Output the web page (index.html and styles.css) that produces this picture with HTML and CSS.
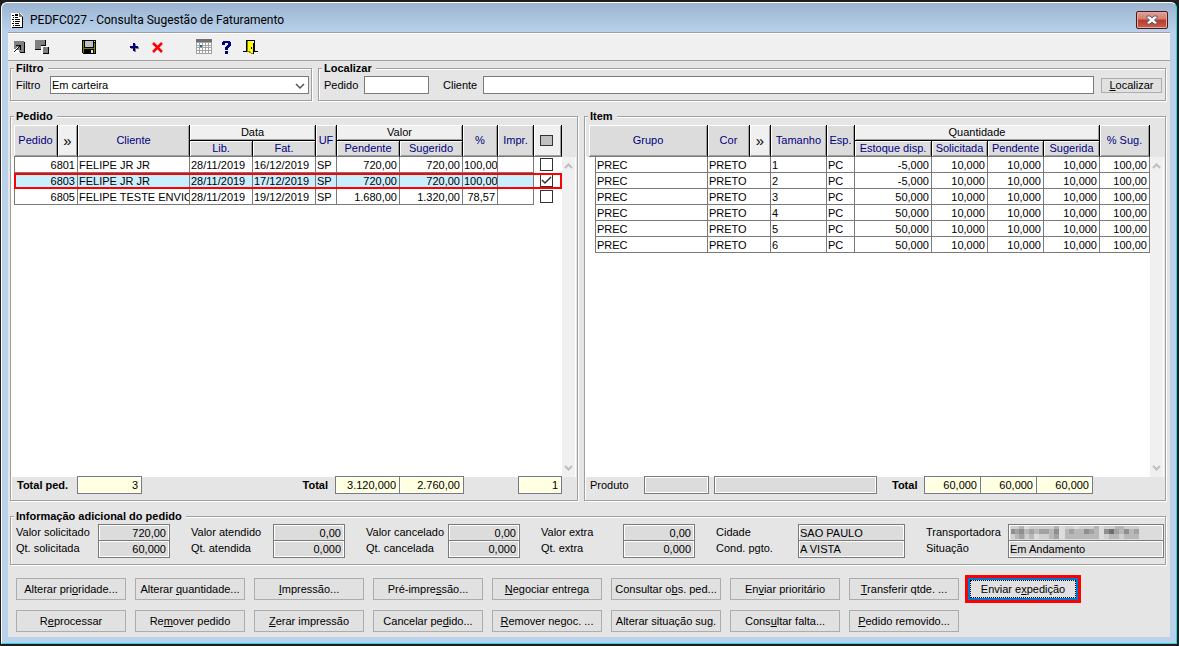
FILE: index.html
```
<!DOCTYPE html>
<html lang="pt-BR">
<head>
    <meta charset="UTF-8">
    <meta name="viewport" content="width=device-width, initial-scale=1.0">
    <title>PEDFC027 - Consulta Sugestão de Faturamento</title>
    <link rel="stylesheet" href="styles.css">
</head>
<body>
<div class="window">
    <header class="titlebar">
        <svg class="title-icon" width="14" height="17" viewBox="0 0 14 17" shape-rendering="crispEdges">
            <path d="M0 1h9l3 3v12H0z" fill="#fff"/>
            <path d="M11 5h1v11h-1zM1 15h11v1H1z" fill="#000"/>
            <path d="M8 1h1v1h1v1h1v1h1v1H8z" fill="#777"/>
            <path d="M1 3h2v1H1zM4 2h3v2H4zM2 5h1v1H2zM4 5h3v1H4zM1 7h2v1H1zM4 7h5v1H4zM2 9h1v1H2zM4 9h5v1H4zM1 11h2v1H1zM4 11h4v1H4zM2 13h1v1H2zM4 13h5v1H4z" fill="#000"/>
        </svg>
        <h1>PEDFC027 - Consulta Sugestão de Faturamento</h1>
        <button type="button" class="close" aria-label="Fechar">
            <svg width="12" height="10" viewBox="0 0 12 10">
                <path d="M1 1h3l2 2 2-2h3v1.500L8.500 5 11 7.500V9H8L6 7 4 9H1V7.500L3.500 5 1 2.500z" fill="#fff" stroke="#555b6e"/>
            </svg>
        </button>
    </header>
    <main class="client">
        <div class="toolbar">
            <button type="button" class="tool" aria-label="Restaurar">
                <svg width="16" height="16" viewBox="0 0 16 16" shape-rendering="crispEdges">
                    <path d="M3 2h10v11H3z" fill="#808080"/>
                    <path d="M13 3h1v11H9v-1h4z" fill="#000"/>
                    <path d="M2 10h3v1h3v3H2z" fill="#fff"/>
                    <path d="M5 6h5v5H9V8H8v1H7v1H6v1H5v1H4v1H3v-1h1v-1h1v-1h1V9h1V8h1V7H5z" fill="#000"/>
                    <path d="M6 8h1v1H6zM5 9h1v1H5z" fill="#fff"/>
                </svg>
            </button>
            <button type="button" class="tool" aria-label="Organizar">
                <svg width="16" height="16" viewBox="0 0 16 16" shape-rendering="crispEdges">
                    <path d="M1 1h10v5H7v4H1z" fill="#808080"/>
                    <path d="M11 1h1v5h-1zM1 10h6v1H1zM7 6h5v1H7z" fill="#000"/>
                    <path d="M7 7h8v8H7z" fill="#fff"/>
                    <path d="M9 8h5v6H9z" fill="#808080"/>
                    <path d="M14 8h1v7H9v-1h5z" fill="#000"/>
                </svg>
            </button>
            <button type="button" class="tool tool-save" aria-label="Salvar">
                <svg width="16" height="16" viewBox="0 0 16 16" shape-rendering="crispEdges">
                    <path d="M1 1h14v14H2v-1H1z" fill="#000"/>
                    <path d="M2 2h1v12H2zM13 4h1v10h-1zM3 9h10v1H3z" fill="#808000"/>
                    <path d="M4 2h8v6H4z" fill="#c0c0c0"/>
                    <path d="M13 2h1v1h-1zM10 11h2v3h-2z" fill="#e6e6e6"/>
                </svg>
            </button>
            <button type="button" class="tool tool-add" aria-label="Incluir">
                <svg width="16" height="16" viewBox="0 0 16 16" shape-rendering="crispEdges">
                    <path d="M8 5h2v3h3v2h-3v3H8v-3H5V8h3z" fill="#808080"/>
                    <path d="M7 4h2v3h3v2H9v3H7V9H4V7h3z" fill="#000080"/>
                </svg>
            </button>
            <button type="button" class="tool" aria-label="Excluir">
                <svg width="16" height="16" viewBox="0 0 16 16">
                    <path d="M4 4l9 9M13 4l-9 9" stroke="#f00" stroke-width="2.500"/>
                </svg>
            </button>
            <button type="button" class="tool tool-calendar" aria-label="Calendário">
                <svg width="16" height="16" viewBox="0 0 16 16" shape-rendering="crispEdges">
                    <path d="M0 3h16v12H0z" fill="#a0a0a0"/>
                    <path d="M0 0h16v3H0z" fill="#707070"/>
                    <path d="M1 4h2v2H1zM4 4h2v2H4zM7 4h2v2H7zM10 4h2v2h-2zM13 4h2v2h-2zM1 7h2v1H1zM7 7h2v1H7zM10 7h2v1h-2zM13 7h2v1h-2zM1 9h2v2H1zM4 9h2v2H4zM7 9h2v2H7zM10 9h2v2h-2zM13 9h2v2h-2zM1 12h2v2H1zM4 12h2v2H4zM7 12h2v2H7zM10 12h2v2h-2zM13 12h2v2h-2z" fill="#fff"/>
                    <path d="M4 6h2v2H4z" fill="#0070a0"/>
                </svg>
            </button>
            <button type="button" class="tool" aria-label="Ajuda">
                <svg width="16" height="16" viewBox="0 0 16 16" shape-rendering="crispEdges">
                    <path d="M4 2h7v1h1v4h-1v1h-1v1H9v2H6V8h1V7h1V6h1V4H6v2H3V3h1zM6 12h3v3H6z" fill="#000080"/>
                </svg>
            </button>
            <button type="button" class="tool" aria-label="Sair">
                <svg width="16" height="16" viewBox="0 0 16 16" shape-rendering="crispEdges">
                    <path d="M4 1h9v11h3v1h-4V2H5v11H1v-1h3z" fill="#000"/>
                    <path d="M6 2h3v1h2v1h1v11h-2v-1H8v-1H6z" fill="#ff0"/>
                    <path d="M5 2h1v10h2v1h1v1h2v1H9v-1H7v-1H5z" fill="#808000"/>
                    <path d="M9 8h1v2H9zM11 4h1v11h-1z" fill="#000"/>
                </svg>
            </button>
        </div>

        <div class="filters">
            <fieldset class="group filtro">
                <legend>Filtro</legend>
                <label for="filtro">Filtro</label>
                <select id="filtro">
                    <option>Em carteira</option>
                </select>
            </fieldset>
            <fieldset class="group localizar">
                <legend>Localizar</legend>
                <label for="locPedido">Pedido</label>
                <input type="text" id="locPedido" class="w65">
                <label for="locCliente">Cliente</label>
                <input type="text" id="locCliente" class="grow">
                <button type="button" class="btn btn-small"><span><u>L</u>ocalizar</span></button>
            </fieldset>
        </div>

        <div class="lists">
            <fieldset class="group list-group">
                <legend>Pedido</legend>
                <div class="list">
                    <div class="list-body">
                        <table>
                            <colgroup>
                                <col class="c44"><col class="c20"><col><col class="c63"><col class="c63"><col class="c21"><col class="c63"><col class="c63"><col class="c35"><col class="c36"><col class="c28">
                            </colgroup>
                            <thead>
                                <tr>
                                    <th rowspan="2">Pedido</th>
                                    <th rowspan="2" class="plain more">»</th>
                                    <th rowspan="2">Cliente</th>
                                    <th colspan="2" class="plain span">Data</th>
                                    <th rowspan="2">UF</th>
                                    <th colspan="2" class="plain span">Valor</th>
                                    <th rowspan="2">%</th>
                                    <th rowspan="2">Impr.</th>
                                    <th rowspan="2" class="plain check"><button type="button" class="mark-all" aria-label="Marcar todos"></button></th>
                                </tr>
                                <tr>
                                    <th>Lib.</th>
                                    <th>Fat.</th>
                                    <th>Pendente</th>
                                    <th>Sugerido</th>
                                </tr>
                            </thead>
                            <tbody>
                                <tr>
                                    <td colspan="2" class="num first">6801</td>
                                    <td>FELIPE JR JR</td>
                                    <td>28/11/2019</td>
                                    <td>16/12/2019</td>
                                    <td>SP</td>
                                    <td class="num">720,00</td>
                                    <td class="num">720,00</td>
                                    <td class="num">100,00</td>
                                    <td></td>
                                    <td class="check"><input type="checkbox" aria-label="Pedido 6801"></td>
                                </tr>
                                <tr class="selected">
                                    <td colspan="2" class="num first">6803</td>
                                    <td>FELIPE JR JR</td>
                                    <td>28/11/2019</td>
                                    <td>17/12/2019</td>
                                    <td>SP</td>
                                    <td class="num">720,00</td>
                                    <td class="num">720,00</td>
                                    <td class="num">100,00</td>
                                    <td></td>
                                    <td class="check"><input type="checkbox" aria-label="Pedido 6803" checked></td>
                                </tr>
                                <tr>
                                    <td colspan="2" class="num first">6805</td>
                                    <td>FELIPE TESTE ENVIO C</td>
                                    <td>28/11/2019</td>
                                    <td>19/12/2019</td>
                                    <td>SP</td>
                                    <td class="num">1.680,00</td>
                                    <td class="num">1.320,00</td>
                                    <td class="num">78,57</td>
                                    <td></td>
                                    <td class="check"><input type="checkbox" aria-label="Pedido 6805"></td>
                                </tr>
                            </tbody>
                        </table>
                    </div>
                    <div class="scrollbar">
                        <svg width="9" height="6" viewBox="0 0 9 6"><path d="M1 5l3.500-3.500L8 5" fill="none" stroke="#bfbfbf" stroke-width="2"/></svg>
                        <svg width="9" height="6" viewBox="0 0 9 6"><path d="M1 1l3.500 3.500L8 1" fill="none" stroke="#bfbfbf" stroke-width="2"/></svg>
                    </div>
                </div>
                <div class="totals totals-pedido">
                    <label for="totalPed" class="strong">Total ped.</label>
                    <input type="text" id="totalPed" class="sum w65" value="3" readonly>
                    <label for="totalPendente" class="strong push">Total</label>
                    <div class="joined">
                        <input type="text" id="totalPendente" class="sum w65" value="3.120,000" readonly>
                        <input type="text" class="sum w65" value="2.760,00" aria-label="Total sugerido" readonly>
                    </div>
                    <input type="text" class="sum marked" value="1" aria-label="Pedidos marcados" readonly>
                </div>
            </fieldset>

            <fieldset class="group list-group">
                <legend>Item</legend>
                <div class="list list-item">
                    <div class="list-body">
                        <table>
                            <colgroup>
                                <col class="c7"><col><col class="c42"><col class="c21"><col class="c56"><col class="c28"><col class="c77"><col class="c56"><col class="c56"><col class="c56"><col class="c50">
                            </colgroup>
                            <thead>
                                <tr>
                                    <th rowspan="2" colspan="2">Grupo</th>
                                    <th rowspan="2">Cor</th>
                                    <th rowspan="2" class="plain more">»</th>
                                    <th rowspan="2">Tamanho</th>
                                    <th rowspan="2">Esp.</th>
                                    <th colspan="4" class="plain span">Quantidade</th>
                                    <th rowspan="2">% Sug.</th>
                                </tr>
                                <tr>
                                    <th>Estoque disp.</th>
                                    <th>Solicitada</th>
                                    <th>Pendente</th>
                                    <th>Sugerida</th>
                                </tr>
                            </thead>
                            <tbody>
                                <tr><td class="gutter"></td><td>PREC</td><td colspan="2">PRETO</td><td>1</td><td>PC</td><td class="num">-5,000</td><td class="num">10,000</td><td class="num">10,000</td><td class="num">10,000</td><td class="num">100,00</td></tr>
                                <tr><td class="gutter"></td><td>PREC</td><td colspan="2">PRETO</td><td>2</td><td>PC</td><td class="num">-5,000</td><td class="num">10,000</td><td class="num">10,000</td><td class="num">10,000</td><td class="num">100,00</td></tr>
                                <tr><td class="gutter"></td><td>PREC</td><td colspan="2">PRETO</td><td>3</td><td>PC</td><td class="num">50,000</td><td class="num">10,000</td><td class="num">10,000</td><td class="num">10,000</td><td class="num">100,00</td></tr>
                                <tr><td class="gutter"></td><td>PREC</td><td colspan="2">PRETO</td><td>4</td><td>PC</td><td class="num">50,000</td><td class="num">10,000</td><td class="num">10,000</td><td class="num">10,000</td><td class="num">100,00</td></tr>
                                <tr><td class="gutter"></td><td>PREC</td><td colspan="2">PRETO</td><td>5</td><td>PC</td><td class="num">50,000</td><td class="num">10,000</td><td class="num">10,000</td><td class="num">10,000</td><td class="num">100,00</td></tr>
                                <tr><td class="gutter"></td><td>PREC</td><td colspan="2">PRETO</td><td>6</td><td>PC</td><td class="num">50,000</td><td class="num">10,000</td><td class="num">10,000</td><td class="num">10,000</td><td class="num">100,00</td></tr>
                            </tbody>
                        </table>
                    </div>
                    <div class="scrollbar">
                        <svg width="9" height="6" viewBox="0 0 9 6"><path d="M1 5l3.500-3.500L8 5" fill="none" stroke="#bfbfbf" stroke-width="2"/></svg>
                        <svg width="9" height="6" viewBox="0 0 9 6"><path d="M1 1l3.500 3.500L8 1" fill="none" stroke="#bfbfbf" stroke-width="2"/></svg>
                    </div>
                </div>
                <div class="totals totals-item">
                    <label for="produto">Produto</label>
                    <input type="text" id="produto" class="info w65" readonly>
                    <input type="text" class="info grow" aria-label="Descrição do produto" readonly>
                    <label for="totalItem" class="strong">Total</label>
                    <div class="joined">
                        <input type="text" id="totalItem" class="sum w57" value="60,000" readonly>
                        <input type="text" class="sum w57" value="60,000" aria-label="Total pendente" readonly>
                        <input type="text" class="sum w57" value="60,000" aria-label="Total sugerida" readonly>
                    </div>
                </div>
            </fieldset>
        </div>

        <fieldset class="group adicional">
            <legend>Informação adicional do pedido</legend>
            <div class="pair">
                <label for="valSolicitado">Valor solicitado</label>
                <input type="text" id="valSolicitado" class="info num" value="720,00" readonly>
                <label for="qtSolicitada">Qt. solicitada</label>
                <input type="text" id="qtSolicitada" class="info num" value="60,000" readonly>
            </div>
            <div class="pair">
                <label for="valAtendido">Valor atendido</label>
                <input type="text" id="valAtendido" class="info num" value="0,00" readonly>
                <label for="qtAtendida">Qt. atendida</label>
                <input type="text" id="qtAtendida" class="info num" value="0,000" readonly>
            </div>
            <div class="pair">
                <label for="valCancelado">Valor cancelado</label>
                <input type="text" id="valCancelado" class="info num" value="0,00" readonly>
                <label for="qtCancelada">Qt. cancelada</label>
                <input type="text" id="qtCancelada" class="info num" value="0,000" readonly>
            </div>
            <div class="pair">
                <label for="valExtra">Valor extra</label>
                <input type="text" id="valExtra" class="info num" value="0,00" readonly>
                <label for="qtExtra">Qt. extra</label>
                <input type="text" id="qtExtra" class="info num" value="0,000" readonly>
            </div>
            <div class="pair pair-text">
                <label for="cidade">Cidade</label>
                <input type="text" id="cidade" class="info" value="SAO PAULO" readonly>
                <label for="condPgto">Cond. pgto.</label>
                <input type="text" id="condPgto" class="info" value="A VISTA" readonly>
            </div>
            <div class="pair pair-wide">
                <span>Transportadora</span>
                <div class="info masked">
                    <svg width="130" height="13" viewBox="0 0 130 13" shape-rendering="crispEdges">
                        <path d="M0 0h128v13H0z" fill="#cfcfcf"/>
                        <path d="M0 3h48v5H0zM54 3h34v10H54zM94 3h34v5H94zM4 8h10v5H4zM18 8h10v5H18zM38 8h10v5H38zM98 8h10v5H98zM113 8h15v5H113z" fill="#b8b8b8"/>
                        <path d="M8 0h5v3H8zM43 0h5v3h-5zM83 0h5v3h-5zM104 0h9v3h-9z" fill="#b4b4b4"/>
                        <path d="M4 3h5v5H4zM18 3h5v5h-5zM28 3h10v5H28zM58 3h5v5h-5zM78 3h5v5h-5zM103 3h5v5h-5zM123 3h5v5h-5zM8 8h5v5H8zM43 8h5v5h-5z" fill="#a2a2a2"/>
                        <path d="M0 3h4v5H0zM8 3h5v5H8zM43 3h5v5h-5zM73 3h5v5h-5zM93 3h5v5h-5zM113 3h5v5h-5z" fill="#8e8e8e"/>
                        <path d="M98 3h5v5h-5z" fill="#6f6f6f"/>
                        <path d="M48 0h6v13h-6zM88 0h5v13h-5zM13 0h5v3h-5zM63 0h5v3h-5zM23 8h5v5h-5z" fill="#dcdcdc"/>
                    </svg>
                </div>
                <label for="situacao">Situação</label>
                <input type="text" id="situacao" class="info" value="Em Andamento" readonly>
            </div>
        </fieldset>

        <div class="actions">
            <button type="button" class="btn"><span>Alterar pri<u>o</u>ridade...</span></button>
            <button type="button" class="btn"><span>Alterar <u>q</u>uantidade...</span></button>
            <button type="button" class="btn"><span><u>I</u>mpressão...</span></button>
            <button type="button" class="btn"><span>Pré-impre<u>s</u>são...</span></button>
            <button type="button" class="btn"><span><u>N</u>egociar entrega</span></button>
            <button type="button" class="btn"><span>Consultar o<u>b</u>s. ped...</span></button>
            <button type="button" class="btn"><span>En<u>v</u>iar prioritário</span></button>
            <button type="button" class="btn"><span><u>T</u>ransferir qtde. ...</span></button>
            <button type="button" class="btn focused"><span>Enviar e<u>x</u>pedição</span></button>
            <button type="button" class="btn"><span>R<u>e</u>processar</span></button>
            <button type="button" class="btn"><span>Re<u>m</u>over pedido</span></button>
            <button type="button" class="btn"><span><u>Z</u>erar impressão</span></button>
            <button type="button" class="btn"><span>Cancelar pe<u>d</u>ido...</span></button>
            <button type="button" class="btn"><span><u>R</u>emover negoc. ...</span></button>
            <button type="button" class="btn"><span>Alterar situação su<u>g</u>.</span></button>
            <button type="button" class="btn"><span>Cons<u>u</u>ltar falta...</span></button>
            <button type="button" class="btn"><span><u>P</u>edido removido...</span></button>
        </div>
    </main>
</div>
</body>
</html>
```
FILE: styles.css
```
* {
    box-sizing: border-box;
}
body {
    margin: 0;
    padding: 2px 2px 2px 1px;
    height: 100vh;
    background-color: #1e1e1e;
    font-family: "Liberation Sans", Arial, sans-serif;
    font-size: 11px;
    line-height: 13px;
    color: #000;
}
input, select, button {
    margin: 0;
    padding: 0;
    border-radius: 0;
    font: inherit;
    color: inherit;
}

/* window frame */
.window {
    display: flex;
    flex-direction: column;
    height: 100%;
    padding: 0 6px 6px;
    background-color: #b9d1ea;
    border: 1px solid #27d3e8;
    border-top-color: #fff;
    border-left-color: #fff;
    border-radius: 6px 6px 0 0;
    background-image: linear-gradient(#9ab4d1, #b9d1ea 29px);
}
.titlebar {
    display: flex;
    align-items: center;
    gap: 5px;
    height: 29px;
    padding: 5px 2px 0 3px;
}
.titlebar h1 {
    flex: 1;
    margin: 0;
    font-family: Roboto, "Noto Sans", sans-serif;
    font-size: 12px;
    font-weight: normal;
    line-height: 16px;
}
.close {
    display: flex;
    align-items: center;
    justify-content: center;
    width: 32px;
    height: 18px;
    border: 1px solid #4d1522;
    border-radius: 2px;
    box-shadow: inset 0 0 0 1px #e6a99f;
    background-image: linear-gradient(#e3a096, #d17c6f 45%, #b53a26 50%, #c9604a);
}
.client {
    display: flex;
    flex: 1;
    flex-direction: column;
    min-height: 0;
    background-color: #e5e5e5;
}

/* toolbar */
.toolbar {
    display: flex;
    align-items: center;
    gap: 7px;
    height: 29px;
    padding-left: 3px;
    background-color: #f0f0f0;
    border-top: 1px solid #a0a0a0;
    border-bottom: 1px solid #a0a0a0;
    box-shadow: inset 0 1px #fff;
}
.tool {
    width: 16px;
    height: 16px;
    border: none;
    background: none;
}
.tool svg {
    display: block;
}
.tool-save, .tool-calendar {
    margin-left: 24px;
}
.tool-add {
    margin-left: 22px;
}

/* group boxes */
.group {
    display: flex;
    min-width: 0;
    margin: 0;
    border: 1px solid #a0a0a0;
    box-shadow: inset 1px 1px #fff, 1px 1px #fff;
}
.group legend {
    margin-left: -2px;
    padding: 0 4px 0 2px;
    background-color: #e5e5e5;
    font-weight: bold;
}
.strong {
    font-weight: bold;
}
.grow {
    flex: 1;
    min-width: 0;
}
.push {
    margin-left: auto;
}
.w57 {
    width: 57px;
}
.w65 {
    width: 65px;
}
input[type="text"], select {
    height: 18px;
    padding: 0 3px 0 1px;
    background-color: #fff;
    border: 1px solid #7a7a7a;
    outline: none;
}
input.info, .info {
    background-color: #dcdcdc;
    border: 1px solid #7a7a7a;
    box-shadow: inset 0 0 0 1px #fff;
}
input.sum {
    background-color: #ffffe1;
    box-shadow: inset 0 0 0 1px #fff;
    text-align: right;
}
.num {
    text-align: right;
}

.filters {
    display: flex;
    gap: 6px;
    padding: 1px 4px 0 2px;
}
.filters .group {
    align-items: center;
    padding: 1px 2px 6px 5px;
}
.filtro {
    width: 302px;
}
.filtro label {
    width: 34px;
}
.filtro select {
    flex: 1;
    appearance: none;
    background-image: url("data:image/svg+xml,%3Csvg xmlns='http://www.w3.org/2000/svg' width='10' height='7'%3E%3Cpath d='M1 1l4 4 4-4' fill='none' stroke='%23555' stroke-width='1.500'/%3E%3C/svg%3E");
    background-repeat: no-repeat;
    background-position: right 3px bottom 3px;
}
.localizar {
    flex: 1;
}
.localizar label {
    width: 40px;
}
.localizar .w65 {
    margin-right: 14px;
}
.btn {
    height: 22px;
    background-color: #e1e1e1;
    border: 1px solid #adadad;
    text-align: center;
    white-space: nowrap;
}
.btn-small {
    width: 61px;
    height: 15px;
    margin: 0 1px 0 7px;
    line-height: 12px;
}

/* order and item lists */
.lists {
    display: grid;
    grid-template-columns: 568fr 582fr;
    gap: 6px;
    flex: 1;
    min-height: 0;
    padding: 9px 4px 0 2px;
}
.list-group {
    flex-direction: column;
    padding: 2px 1px 6px;
}
.list-group legend {
    margin-left: 2px;
}
.list {
    display: flex;
    flex: 1;
    padding: 0 1px 0 2px;
    background-image: linear-gradient(#e5e5e5 32px, #fff 32px);
}
.list-item {
    padding: 0 1px 0 3px;
}
.list-body {
    flex: 1;
    min-width: 0;
}
.list table {
    width: 100%;
    table-layout: fixed;
    border-collapse: separate;
    border-spacing: 0;
}
.c7 { width: 7px; }
.c20 { width: 20px; }
.c21 { width: 21px; }
.c28 { width: 28px; }
.c35 { width: 35px; }
.c36 { width: 36px; }
.c42 { width: 42px; }
.c44 { width: 44px; }
.c50 { width: 50px; }
.c56 { width: 56px; }
.c63 { width: 63px; }
.c77 { width: 77px; }
.list th {
    height: 16px;
    padding: 0;
    overflow: hidden;
    background-color: #dcdcdc;
    border-right: 1px solid #000;
    border-bottom: 1px solid #7a7a7a;
    box-shadow: inset 1px 1px #fff, inset -1px -1px #a0a0a0;
    color: #000080;
    font-weight: normal;
    white-space: nowrap;
}
.list th.plain {
    background-color: #f0f0f0;
    color: #000;
}
.list th.more {
    font-size: 15px;
}
.list th.span {
    border-bottom-color: #000;
}
.list th.check {
    padding-right: 2px;
}
.list td {
    height: 16px;
    padding: 1px 2px 0 1px;
    overflow: hidden;
    border-right: 1px solid #7a7a7a;
    border-bottom: 1px solid #7a7a7a;
    line-height: 14px;
    white-space: nowrap;
}
.list td.first {
    border-left: 1px solid #7a7a7a;
}
.list td.gutter {
    border-bottom: none;
}
.list td.check {
    padding: 1px 3px 2px 0;
    border: none;
    vertical-align: top;
}
.list .selected td {
    background-color: #c9efff;
}
.list .selected td.check {
    background-color: #fff;
}
.list .selected {
    outline: 2px solid #f00;
    outline-offset: -2px;
}
.check input {
    display: block;
    width: 13px;
    height: 13px;
    margin: 0 auto;
    appearance: none;
    background-color: #fff;
    border: 1px solid #333;
}
.check input:checked {
    background-image: url("data:image/svg+xml,%3Csvg xmlns='http://www.w3.org/2000/svg' width='11' height='11'%3E%3Cpath d='M1 5l3 3 6-6' fill='none' stroke='%23333' stroke-width='1.500'/%3E%3C/svg%3E");
}
.mark-all {
    display: block;
    width: 13px;
    height: 11px;
    margin: 0 auto;
    background-color: #c0c0c0;
    border: 1px solid #333;
}
.scrollbar {
    display: flex;
    flex-direction: column;
    align-items: center;
    justify-content: space-between;
    width: 13px;
    margin-top: 32px;
    padding: 6px 0;
    background-color: #f0f0f0;
}
.totals {
    display: flex;
    align-items: center;
    margin-top: -1px;
}
.totals-pedido {
    padding: 0 14px 0 5px;
}
.totals-pedido label:first-child {
    width: 60px;
}
.totals-pedido .push {
    margin-right: 7px;
}
.marked {
    width: 44px;
    margin-left: 54px;
}
.joined {
    display: flex;
}
.joined input + input {
    margin-left: -1px;
}
.totals-item {
    padding: 0 71px 0 4px;
}
.totals-item label:first-child {
    width: 54px;
}
.totals-item .grow {
    margin-left: 5px;
}
.totals-item .strong {
    width: 47px;
    padding-left: 15px;
}

/* order details */
.adicional {
    gap: 22px;
    margin: 9px 4px 0 2px;
    padding: 1px 1px 6px 5px;
}
.pair {
    display: grid;
    grid-template-columns: 82px 72px;
    grid-template-rows: 16px 18px;
}
.adicional .pair {
    margin-right: -1px;
}
.pair-text {
    grid-template-columns: 82px 107px;
}
.adicional .pair-wide {
    flex: 1;
    grid-template-columns: 82px 1fr;
    margin-right: 0;
}
.pair label, .pair span {
    padding-top: 2px;
}
.pair .info {
    width: 100%;
    height: 18px;
}
.masked {
    padding: 1px 2px;
}
.masked svg {
    display: block;
}

/* bottom buttons */
.actions {
    display: grid;
    grid-template-columns: repeat(9, 110px);
    gap: 10px 9px;
    padding: 13px 8px 5px;
}
.focused {
    border: 2px solid #0078d7;
    outline: 3px solid #f00;
}
.focused span {
    display: block;
    height: 16px;
    margin: 0 1px;
    line-height: 16px;
    outline: 1px dotted #000;
}
```
